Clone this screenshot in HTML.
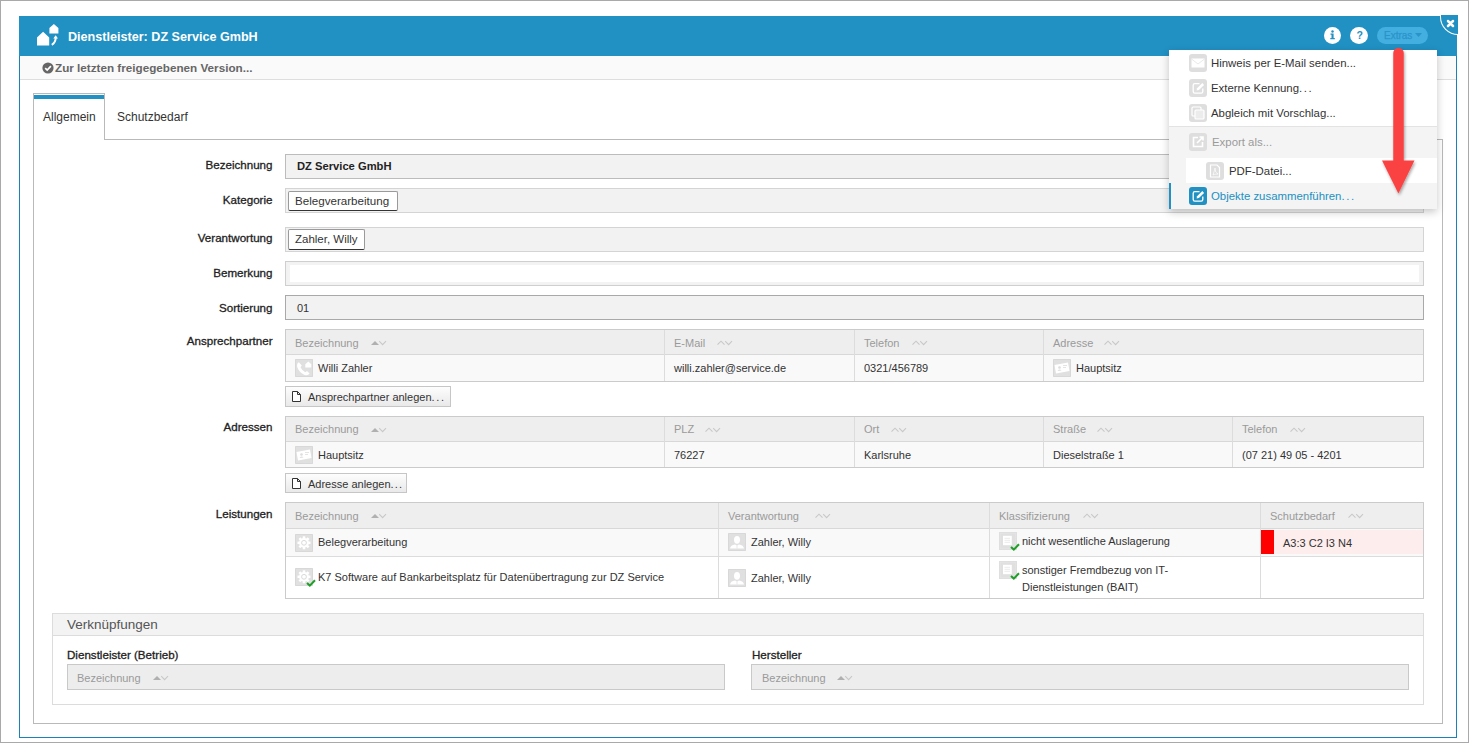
<!DOCTYPE html>
<html><head><meta charset="utf-8"><style>
html,body{margin:0;padding:0;width:1469px;height:743px;overflow:hidden;background:#fff;font-family:"Liberation Sans",sans-serif;}
.a{position:absolute;box-sizing:border-box;}
.t{position:absolute;white-space:nowrap;line-height:1;}
.circ{border-radius:50%;background:#fff;color:#2190c3;text-align:center;}
.ib{width:18px;height:18px;background:#e0e0e0;border-radius:1px;box-shadow:inset 0 0 0 1px #d8d8d8;}
.ib svg,.mib svg{display:block}
.mib{width:18px;height:18px;border-radius:3px;}
</style></head><body>
<div class="a" style="left:0px;top:0px;width:1469px;height:743px;border:1px solid #a9a9a9;background:#fff"></div>
<div class="a" style="left:19px;top:16px;width:1438px;height:722px;border:1px solid #1b82b8;background:#fff"></div>
<div class="a" style="left:19px;top:16px;width:1438px;height:40px;background:#2190c3"></div>
<svg class="a" style="left:30px;top:20px" width="32" height="30" viewBox="0 0 32 30">
<path d="M7 25.4 V17.4 L13.1 11.8 L19.2 17.4 V25.4 Z" fill="#fff"/>
<path d="M19.4 13.5 V7.9 L23.9 4 L28.4 7.9 V13.5 Z" fill="#fff"/>
<path d="M21.8 24.8 Q25.6 22.5 25.7 18" stroke="#fff" stroke-width="2" fill="none"/>
<path d="M23.3 18.6 L25.7 15.2 L28 18.6 Z" fill="#fff"/>
</svg>
<div class="t" style="left:68px;top:31.33px;font-size:12.6px;font-weight:700;color:#fff;">Dienstleister: DZ Service GmbH</div>
<div class="a circ" style="left:1324px;top:27px;width:17px;height:17px"></div>
<svg class="a" style="left:1324px;top:27px" width="17" height="17" viewBox="0 0 17 17"><circle cx="8.5" cy="4.6" r="1.25" fill="#2190c3"/><path d="M6.5 6.6 H9.6 V11 H10.8 V12.2 H6.3 V11 H7.5 V7.7 H6.5 Z" fill="#2190c3"/></svg>
<div class="a circ" style="left:1350px;top:27px;width:18px;height:17px"></div>
<div class="t" style="left:1356.6px;top:30.31px;font-size:10.5px;font-weight:700;color:#2190c3;">?</div>
<div class="a" style="left:1377px;top:27px;width:51px;height:17px;border-radius:9px;background:#43aee0"></div>
<div class="t" style="left:1384px;top:30.54px;font-size:10px;font-weight:400;color:#2a94c9;-webkit-text-stroke:0.25px #2a94c9">Extras</div>
<svg class="a" style="left:1415px;top:33px" width="7" height="5"><path d="M0 0 H7 L3.5 4 Z" fill="#2a94c9"/></svg>
<div class="a" style="left:1440px;top:15px;width:18px;height:20px;background:#2190c3;border-left:1px solid #fff;border-bottom:1px solid #fff;border-bottom-left-radius:18px;box-sizing:border-box"></div>
<svg class="a" style="left:1446px;top:19px" width="9" height="9" viewBox="0 0 9 9"><path d="M2 2 L7 7 M7 2 L2 7" stroke="#fff" stroke-width="2.5" stroke-linecap="round"/></svg>
<div class="a" style="left:20px;top:56px;width:1436px;height:23px;background:#fafafa"></div>
<div class="a" style="left:20px;top:79px;width:1436px;height:1px;background:#dedede"></div>
<svg class="a" style="left:42px;top:62px" width="12" height="12" viewBox="0 0 12 12"><circle cx="6" cy="6" r="5.6" fill="#666"/><path d="M3.2 6.2 L5.2 8.1 L8.9 4.2" stroke="#fff" stroke-width="1.7" fill="none"/></svg>
<div class="t" style="left:55px;top:61.60px;font-size:11.7px;font-weight:700;color:#666;">Zur letzten freigegebenen Version...</div>
<div class="a" style="left:33px;top:139px;width:1410px;height:585px;border:1px solid #b9b9b9"></div>
<div class="a" style="left:33px;top:93px;width:72px;height:47px;border:1px solid #b9b9b9;border-bottom:none;background:#fff"></div>
<div class="a" style="left:34px;top:95px;width:70px;height:4px;background:#2190c3"></div>
<div class="t" style="left:43px;top:110.84px;font-size:12px;font-weight:400;color:#333;">Allgemein</div>
<div class="t" style="left:117px;top:110.84px;font-size:12px;font-weight:400;color:#333;">Schutzbedarf</div>
<div class="t" style="right:1196.5px;top:159.18px;font-size:11.6px;font-weight:400;color:#222;text-align:right;-webkit-text-stroke:0.3px #222">Bezeichnung</div>
<div class="a" style="left:285px;top:154px;width:1139px;height:25px;border:1px solid #bcbcbc;background:#f2f2f2"></div>
<div class="t" style="left:297px;top:160.52px;font-size:11.2px;font-weight:700;color:#222;">DZ Service GmbH</div>
<div class="t" style="right:1196.5px;top:194.18px;font-size:11.6px;font-weight:400;color:#222;text-align:right;-webkit-text-stroke:0.3px #222">Kategorie</div>
<div class="a" style="left:285px;top:188px;width:1139px;height:25px;border:1px solid #d4d4d4;background:#f2f2f2"></div>
<div class="a" style="left:288px;top:191px;width:110px;height:20px;border:1px solid #9a9a9a;border-bottom-color:#333;border-radius:2px;background:#fff"></div>
<div class="t" style="left:295px;top:195.18px;font-size:11.6px;font-weight:400;color:#333;">Belegverarbeitung</div>
<div class="t" style="right:1196.5px;top:232.18px;font-size:11.6px;font-weight:400;color:#222;text-align:right;-webkit-text-stroke:0.3px #222">Verantwortung</div>
<div class="a" style="left:285px;top:227px;width:1139px;height:25px;border:1px solid #d4d4d4;background:#f2f2f2"></div>
<div class="a" style="left:288px;top:229px;width:77px;height:21px;border:1px solid #9a9a9a;border-bottom-color:#333;border-radius:2px;background:#fff"></div>
<div class="t" style="left:295px;top:234.27px;font-size:11.5px;font-weight:400;color:#333;">Zahler, Willy</div>
<div class="t" style="right:1196.5px;top:267.18px;font-size:11.6px;font-weight:400;color:#222;text-align:right;-webkit-text-stroke:0.3px #222">Bemerkung</div>
<div class="a" style="left:285px;top:261px;width:1139px;height:25px;border:1px solid #cfcfcf;background:#f2f2f2"></div>
<div class="a" style="left:290px;top:265px;width:1129px;height:17px;background:#fff;box-shadow:0 0 2px 1px #f4f4f4"></div>
<div class="t" style="right:1196.5px;top:301.68px;font-size:11.6px;font-weight:400;color:#222;text-align:right;-webkit-text-stroke:0.3px #222">Sortierung</div>
<div class="a" style="left:285px;top:295px;width:1139px;height:25px;border:1px solid #a9a9a9;background:#f2f2f2"></div>
<div class="t" style="left:297px;top:303.19px;font-size:11px;font-weight:400;color:#333;">01</div>
<div class="t" style="right:1196.5px;top:335.18px;font-size:11.6px;font-weight:400;color:#222;text-align:right;-webkit-text-stroke:0.3px #222">Ansprechpartner</div>
<div class="a" style="left:285px;top:329px;width:1139px;height:53px;border:1px solid #cbcbcb;background:#fff"></div>
<div class="a" style="left:286px;top:330px;width:1137px;height:24px;background:#eeeeee"></div>
<div class="a" style="left:286px;top:354px;width:1137px;height:1px;background:#d8d8d8"></div>
<div class="a" style="left:286px;top:355px;width:1137px;height:26px;background:#f9f9f9"></div>
<div class="a" style="left:664px;top:330px;width:1px;height:51px;background:#dcdcdc"></div>
<div class="a" style="left:854px;top:330px;width:1px;height:51px;background:#dcdcdc"></div>
<div class="a" style="left:1043px;top:330px;width:1px;height:51px;background:#dcdcdc"></div>
<div class="t" style="left:295px;top:337.69px;font-size:11px;font-weight:400;color:#9a9a9a;">Bezeichnung</div>
<svg class="a" style="left:371px;top:340px" width="16" height="6" viewBox="0 0 16 6"><path d="M0 5 L4 1 L8 5 Z" fill="#b0b0b0"/><path d="M8.2 1.2 L11.6 4.6 L15 1.2" stroke="#c8c8c8" stroke-width="1.1" fill="none"/></svg>
<div class="t" style="left:674px;top:337.69px;font-size:11px;font-weight:400;color:#9a9a9a;">E-Mail</div>
<svg class="a" style="left:717px;top:340px" width="16" height="6" viewBox="0 0 16 6"><path d="M0.5 4.6 L4 1.2 L7.5 4.6" stroke="#c8c8c8" stroke-width="1.1" fill="none"/><path d="M8.2 1.2 L11.6 4.6 L15 1.2" stroke="#c8c8c8" stroke-width="1.1" fill="none"/></svg>
<div class="t" style="left:864px;top:337.69px;font-size:11px;font-weight:400;color:#9a9a9a;">Telefon</div>
<svg class="a" style="left:912px;top:340px" width="16" height="6" viewBox="0 0 16 6"><path d="M0.5 4.6 L4 1.2 L7.5 4.6" stroke="#c8c8c8" stroke-width="1.1" fill="none"/><path d="M8.2 1.2 L11.6 4.6 L15 1.2" stroke="#c8c8c8" stroke-width="1.1" fill="none"/></svg>
<div class="t" style="left:1053px;top:337.69px;font-size:11px;font-weight:400;color:#9a9a9a;">Adresse</div>
<svg class="a" style="left:1104px;top:340px" width="16" height="6" viewBox="0 0 16 6"><path d="M0.5 4.6 L4 1.2 L7.5 4.6" stroke="#c8c8c8" stroke-width="1.1" fill="none"/><path d="M8.2 1.2 L11.6 4.6 L15 1.2" stroke="#c8c8c8" stroke-width="1.1" fill="none"/></svg>
<div class="a ib" style="left:295px;top:359px"><svg width="18" height="18" viewBox="0 0 18 18"><path d="M3.8 3.3 Q1.6 4.6 2.2 8 Q4.2 13.5 9.6 16 Q13 17 14.6 14.6 L12 12 L10.3 13.2 Q7 11.6 5.5 8.3 L6.8 6.6 Z" fill="#fff"/><path d="M10.3 8.6 V5.3 L13.3 2.6 L16.3 5.3 V8.6 Z" fill="#fff"/></svg></div>
<div class="t" style="left:318px;top:362.69px;font-size:11px;font-weight:400;color:#333;">Willi Zahler</div>
<div class="t" style="left:674px;top:362.69px;font-size:11px;font-weight:400;color:#333;">willi.zahler@service.de</div>
<div class="t" style="left:864px;top:362.69px;font-size:11px;font-weight:400;color:#333;">0321/456789</div>
<div class="a ib" style="left:1053px;top:359px"><svg width="18" height="18" viewBox="0 0 18 18"><path d="M1.5 6 L15 3.5 L16.5 12 L3 14.5 Z" fill="#fff"/><circle cx="6.5" cy="8.5" r="1.3" fill="#ddd"/><path d="M4.5 12 Q6.5 9.5 8.5 11.5" fill="#ddd"/><path d="M10 6.5 H14 M10 8.5 H13" stroke="#ddd" stroke-width="0.8"/></svg></div>
<div class="t" style="left:1076px;top:362.69px;font-size:11px;font-weight:400;color:#333;">Hauptsitz</div>
<div class="a" style="left:285px;top:386px;width:166px;height:21px;border:1px solid #c6c6c6;background:linear-gradient(#fdfdfd,#e9e9e9);box-sizing:border-box"></div>
<svg class="a" style="left:291px;top:390px" width="11" height="13" viewBox="0 0 11 13"><path d="M1.5 1.5 H6.5 L9.5 4.5 V11.5 H1.5 Z M6.5 1.5 V4.5 H9.5" stroke="#333" stroke-width="1" fill="#fff"/></svg>
<div class="t" style="left:308px;top:392.19px;font-size:11px;font-weight:400;color:#333;">Ansprechpartner anlegen<span style="letter-spacing:1.7px">...</span></div>
<div class="t" style="right:1196.5px;top:421.18px;font-size:11.6px;font-weight:400;color:#222;text-align:right;-webkit-text-stroke:0.3px #222">Adressen</div>
<div class="a" style="left:285px;top:416px;width:1139px;height:52px;border:1px solid #cbcbcb;background:#fff"></div>
<div class="a" style="left:286px;top:417px;width:1137px;height:24px;background:#eeeeee"></div>
<div class="a" style="left:286px;top:441px;width:1137px;height:1px;background:#d8d8d8"></div>
<div class="a" style="left:286px;top:442px;width:1137px;height:25px;background:#f9f9f9"></div>
<div class="a" style="left:664px;top:417px;width:1px;height:50px;background:#dcdcdc"></div>
<div class="a" style="left:854px;top:417px;width:1px;height:50px;background:#dcdcdc"></div>
<div class="a" style="left:1043px;top:417px;width:1px;height:50px;background:#dcdcdc"></div>
<div class="a" style="left:1232px;top:417px;width:1px;height:50px;background:#dcdcdc"></div>
<div class="t" style="left:295px;top:423.69px;font-size:11px;font-weight:400;color:#9a9a9a;">Bezeichnung</div>
<svg class="a" style="left:371px;top:427px" width="16" height="6" viewBox="0 0 16 6"><path d="M0 5 L4 1 L8 5 Z" fill="#b0b0b0"/><path d="M8.2 1.2 L11.6 4.6 L15 1.2" stroke="#c8c8c8" stroke-width="1.1" fill="none"/></svg>
<div class="t" style="left:674px;top:423.69px;font-size:11px;font-weight:400;color:#9a9a9a;">PLZ</div>
<svg class="a" style="left:705px;top:427px" width="16" height="6" viewBox="0 0 16 6"><path d="M0.5 4.6 L4 1.2 L7.5 4.6" stroke="#c8c8c8" stroke-width="1.1" fill="none"/><path d="M8.2 1.2 L11.6 4.6 L15 1.2" stroke="#c8c8c8" stroke-width="1.1" fill="none"/></svg>
<div class="t" style="left:864px;top:423.69px;font-size:11px;font-weight:400;color:#9a9a9a;">Ort</div>
<svg class="a" style="left:891px;top:427px" width="16" height="6" viewBox="0 0 16 6"><path d="M0.5 4.6 L4 1.2 L7.5 4.6" stroke="#c8c8c8" stroke-width="1.1" fill="none"/><path d="M8.2 1.2 L11.6 4.6 L15 1.2" stroke="#c8c8c8" stroke-width="1.1" fill="none"/></svg>
<div class="t" style="left:1053px;top:423.69px;font-size:11px;font-weight:400;color:#9a9a9a;">Straße</div>
<svg class="a" style="left:1097px;top:427px" width="16" height="6" viewBox="0 0 16 6"><path d="M0.5 4.6 L4 1.2 L7.5 4.6" stroke="#c8c8c8" stroke-width="1.1" fill="none"/><path d="M8.2 1.2 L11.6 4.6 L15 1.2" stroke="#c8c8c8" stroke-width="1.1" fill="none"/></svg>
<div class="t" style="left:1242px;top:423.69px;font-size:11px;font-weight:400;color:#9a9a9a;">Telefon</div>
<svg class="a" style="left:1290px;top:427px" width="16" height="6" viewBox="0 0 16 6"><path d="M0.5 4.6 L4 1.2 L7.5 4.6" stroke="#c8c8c8" stroke-width="1.1" fill="none"/><path d="M8.2 1.2 L11.6 4.6 L15 1.2" stroke="#c8c8c8" stroke-width="1.1" fill="none"/></svg>
<div class="a ib" style="left:295px;top:446px"><svg width="18" height="18" viewBox="0 0 18 18"><path d="M1.5 6 L15 3.5 L16.5 12 L3 14.5 Z" fill="#fff"/><circle cx="6.5" cy="8.5" r="1.3" fill="#ddd"/><path d="M4.5 12 Q6.5 9.5 8.5 11.5" fill="#ddd"/><path d="M10 6.5 H14 M10 8.5 H13" stroke="#ddd" stroke-width="0.8"/></svg></div>
<div class="t" style="left:318px;top:449.69px;font-size:11px;font-weight:400;color:#333;">Hauptsitz</div>
<div class="t" style="left:674px;top:449.69px;font-size:11px;font-weight:400;color:#333;">76227</div>
<div class="t" style="left:864px;top:449.69px;font-size:11px;font-weight:400;color:#333;">Karlsruhe</div>
<div class="t" style="left:1053px;top:449.69px;font-size:11px;font-weight:400;color:#333;">Dieselstraße 1</div>
<div class="t" style="left:1242px;top:449.69px;font-size:11px;font-weight:400;color:#333;">(07 21) 49 05 - 4201</div>
<div class="a" style="left:285px;top:473px;width:122px;height:20px;border:1px solid #c6c6c6;background:linear-gradient(#fdfdfd,#e9e9e9);box-sizing:border-box"></div>
<svg class="a" style="left:291px;top:477px" width="11" height="13" viewBox="0 0 11 13"><path d="M1.5 1.5 H6.5 L9.5 4.5 V11.5 H1.5 Z M6.5 1.5 V4.5 H9.5" stroke="#333" stroke-width="1" fill="#fff"/></svg>
<div class="t" style="left:308px;top:479.19px;font-size:11px;font-weight:400;color:#333;">Adresse anlegen<span style="letter-spacing:1.2px">...</span></div>
<div class="t" style="right:1196.5px;top:508.18px;font-size:11.6px;font-weight:400;color:#222;text-align:right;-webkit-text-stroke:0.3px #222">Leistungen</div>
<div class="a" style="left:285px;top:502px;width:1139px;height:97px;border:1px solid #cbcbcb;background:#fff"></div>
<div class="a" style="left:286px;top:503px;width:1137px;height:25px;background:#eeeeee"></div>
<div class="a" style="left:286px;top:528px;width:1137px;height:1px;background:#d8d8d8"></div>
<div class="a" style="left:286px;top:529px;width:1137px;height:27px;background:#f9f9f9"></div>
<div class="a" style="left:286px;top:556px;width:1137px;height:1px;background:#dcdcdc"></div>
<div class="a" style="left:286px;top:557px;width:1137px;height:41px;background:#fff"></div>
<div class="a" style="left:718px;top:503px;width:1px;height:95px;background:#dcdcdc"></div>
<div class="a" style="left:989px;top:503px;width:1px;height:95px;background:#dcdcdc"></div>
<div class="a" style="left:1260px;top:503px;width:1px;height:95px;background:#dcdcdc"></div>
<div class="t" style="left:295px;top:510.69px;font-size:11px;font-weight:400;color:#9a9a9a;">Bezeichnung</div>
<svg class="a" style="left:371px;top:513px" width="16" height="6" viewBox="0 0 16 6"><path d="M0 5 L4 1 L8 5 Z" fill="#b0b0b0"/><path d="M8.2 1.2 L11.6 4.6 L15 1.2" stroke="#c8c8c8" stroke-width="1.1" fill="none"/></svg>
<div class="t" style="left:728px;top:510.69px;font-size:11px;font-weight:400;color:#9a9a9a;">Verantwortung</div>
<svg class="a" style="left:815px;top:513px" width="16" height="6" viewBox="0 0 16 6"><path d="M0.5 4.6 L4 1.2 L7.5 4.6" stroke="#c8c8c8" stroke-width="1.1" fill="none"/><path d="M8.2 1.2 L11.6 4.6 L15 1.2" stroke="#c8c8c8" stroke-width="1.1" fill="none"/></svg>
<div class="t" style="left:999px;top:510.69px;font-size:11px;font-weight:400;color:#9a9a9a;">Klassifizierung</div>
<svg class="a" style="left:1083px;top:513px" width="16" height="6" viewBox="0 0 16 6"><path d="M0.5 4.6 L4 1.2 L7.5 4.6" stroke="#c8c8c8" stroke-width="1.1" fill="none"/><path d="M8.2 1.2 L11.6 4.6 L15 1.2" stroke="#c8c8c8" stroke-width="1.1" fill="none"/></svg>
<div class="t" style="left:1270px;top:510.69px;font-size:11px;font-weight:400;color:#9a9a9a;">Schutzbedarf</div>
<svg class="a" style="left:1348px;top:513px" width="16" height="6" viewBox="0 0 16 6"><path d="M0.5 4.6 L4 1.2 L7.5 4.6" stroke="#c8c8c8" stroke-width="1.1" fill="none"/><path d="M8.2 1.2 L11.6 4.6 L15 1.2" stroke="#c8c8c8" stroke-width="1.1" fill="none"/></svg>
<div class="a ib" style="left:295px;top:534px"><svg width="18" height="18" viewBox="0 0 18 18"><g transform="translate(9 8.8)"><circle r="4.9" fill="#fff"/><g fill="#fff"><rect x="-1.25" y="-6.5" width="2.5" height="13"/><rect x="-1.25" y="-6.5" width="2.5" height="13" transform="rotate(45)"/><rect x="-1.25" y="-6.5" width="2.5" height="13" transform="rotate(90)"/><rect x="-1.25" y="-6.5" width="2.5" height="13" transform="rotate(135)"/></g><circle r="2.4" fill="none" stroke="#dadada" stroke-width="1"/></g></svg></div>
<div class="t" style="left:318px;top:536.69px;font-size:11px;font-weight:400;color:#333;">Belegverarbeitung</div>
<div class="a ib" style="left:295px;top:568px"><svg width="18" height="18" viewBox="0 0 18 18"><g transform="translate(9 8.8)"><circle r="4.9" fill="#fff"/><g fill="#fff"><rect x="-1.25" y="-6.5" width="2.5" height="13"/><rect x="-1.25" y="-6.5" width="2.5" height="13" transform="rotate(45)"/><rect x="-1.25" y="-6.5" width="2.5" height="13" transform="rotate(90)"/><rect x="-1.25" y="-6.5" width="2.5" height="13" transform="rotate(135)"/></g><circle r="2.4" fill="none" stroke="#dadada" stroke-width="1"/></g></svg></div>
<svg class="a" style="left:306px;top:579px" width="10" height="8" viewBox="0 0 10 8"><path d="M1 4 L3.8 6.6 L9 1.2" stroke="#1f9e28" stroke-width="2" fill="none"/></svg>
<div class="t" style="left:318px;top:571.69px;font-size:11px;font-weight:400;color:#333;">K7 Software auf Bankarbeitsplatz für Datenübertragung zur DZ Service</div>
<div class="a ib" style="left:728px;top:533px"><svg width="18" height="18" viewBox="0 0 18 18"><ellipse cx="9" cy="6.8" rx="3" ry="3.9" fill="#fff"/><path d="M2 15.5 Q2.5 12.2 7 11.6 L9 12.5 L11 11.6 Q15.5 12.2 16 15.5 Z" fill="#fff"/><path d="M9 12.2 V15.5" stroke="#e0e0e0" stroke-width="0.7"/></svg></div>
<div class="t" style="left:751px;top:536.69px;font-size:11px;font-weight:400;color:#333;">Zahler, Willy</div>
<div class="a ib" style="left:728px;top:569px"><svg width="18" height="18" viewBox="0 0 18 18"><ellipse cx="9" cy="6.8" rx="3" ry="3.9" fill="#fff"/><path d="M2 15.5 Q2.5 12.2 7 11.6 L9 12.5 L11 11.6 Q15.5 12.2 16 15.5 Z" fill="#fff"/><path d="M9 12.2 V15.5" stroke="#e0e0e0" stroke-width="0.7"/></svg></div>
<div class="t" style="left:751px;top:572.69px;font-size:11px;font-weight:400;color:#333;">Zahler, Willy</div>
<div class="a ib" style="left:999px;top:532px"><svg width="18" height="18" viewBox="0 0 18 18"><rect x="1" y="1" width="16" height="16" fill="none" stroke="#e6e6e6" stroke-width="1"/><path d="M4 3.8 H12.8 V13.2 H4 Z" fill="#fff"/><path d="M5.5 6.3 H11 M5.5 8.3 H11 M5.5 10.3 H11" stroke="#e9e9e9" stroke-width="0.9"/></svg></div>
<svg class="a" style="left:1010px;top:543px" width="10" height="8" viewBox="0 0 10 8"><path d="M1 4 L3.8 6.6 L9 1.2" stroke="#1f9e28" stroke-width="2" fill="none"/></svg>
<div class="t" style="left:1022px;top:535.69px;font-size:11px;font-weight:400;color:#333;">nicht wesentliche Auslagerung</div>
<div class="a ib" style="left:999px;top:561px"><svg width="18" height="18" viewBox="0 0 18 18"><rect x="1" y="1" width="16" height="16" fill="none" stroke="#e6e6e6" stroke-width="1"/><path d="M4 3.8 H12.8 V13.2 H4 Z" fill="#fff"/><path d="M5.5 6.3 H11 M5.5 8.3 H11 M5.5 10.3 H11" stroke="#e9e9e9" stroke-width="0.9"/></svg></div>
<svg class="a" style="left:1010px;top:572px" width="10" height="8" viewBox="0 0 10 8"><path d="M1 4 L3.8 6.6 L9 1.2" stroke="#1f9e28" stroke-width="2" fill="none"/></svg>
<div class="t" style="left:1022px;top:564.69px;font-size:11px;font-weight:400;color:#333;">sonstiger Fremdbezug von IT-</div>
<div class="t" style="left:1022px;top:581.69px;font-size:11px;font-weight:400;color:#333;">Dienstleistungen (BAIT)</div>
<div class="a" style="left:1261px;top:530px;width:162px;height:24px;background:#fdeded"></div>
<div class="a" style="left:1261px;top:530px;width:13px;height:24px;background:#f00"></div>
<div class="t" style="left:1283px;top:537.89px;font-size:11px;font-weight:400;color:#333;">A3:3 C2 I3 N4</div>
<div class="a" style="left:52px;top:613px;width:1372px;height:92px;border:1px solid #dcdcdc;background:#fff"></div>
<div class="a" style="left:53px;top:614px;width:1370px;height:21px;background:#f3f3f3"></div>
<div class="a" style="left:53px;top:635px;width:1370px;height:1px;background:#dcdcdc"></div>
<div class="t" style="left:67px;top:617.57px;font-size:13.5px;font-weight:400;color:#555;">Verknüpfungen</div>
<div class="t" style="left:67px;top:649.18px;font-size:11.6px;font-weight:400;color:#222;-webkit-text-stroke:0.3px #222">Dienstleister (Betrieb)</div>
<div class="a" style="left:67px;top:664px;width:658px;height:26px;border:1px solid #c9c9c9;background:#ededed"></div>
<div class="t" style="left:77px;top:672.69px;font-size:11px;font-weight:400;color:#9a9a9a;">Bezeichnung</div>
<svg class="a" style="left:153px;top:675px" width="16" height="6" viewBox="0 0 16 6"><path d="M0 5 L4 1 L8 5 Z" fill="#b0b0b0"/><path d="M8.2 1.2 L11.6 4.6 L15 1.2" stroke="#c8c8c8" stroke-width="1.1" fill="none"/></svg>
<div class="t" style="left:752px;top:649.18px;font-size:11.6px;font-weight:400;color:#222;-webkit-text-stroke:0.3px #222">Hersteller</div>
<div class="a" style="left:751px;top:664px;width:658px;height:26px;border:1px solid #c9c9c9;background:#ededed"></div>
<div class="t" style="left:762px;top:672.69px;font-size:11px;font-weight:400;color:#9a9a9a;">Bezeichnung</div>
<svg class="a" style="left:837px;top:675px" width="16" height="6" viewBox="0 0 16 6"><path d="M0 5 L4 1 L8 5 Z" fill="#b0b0b0"/><path d="M8.2 1.2 L11.6 4.6 L15 1.2" stroke="#c8c8c8" stroke-width="1.1" fill="none"/></svg>
<div class="a" style="left:1169px;top:50px;width:268px;height:159px;background:#fff;box-shadow:0 3px 8px rgba(0,0,0,0.22)"></div>
<div class="a" style="left:1169px;top:126px;width:268px;height:1px;background:#e3e3e3"></div>
<div class="a" style="left:1169px;top:127px;width:268px;height:82px;background:#f4f4f4"></div>
<div class="a" style="left:1186px;top:158px;width:251px;height:25px;background:#fff"></div>
<div class="a" style="left:1169px;top:183px;width:2px;height:26px;background:#2190c3"></div>
<div class="a mib" style="left:1189px;top:54px;background:#dedede"><svg width="18" height="18" viewBox="0 0 18 18"><rect x="2.5" y="4.5" width="13" height="9" fill="#fff"/><path d="M2.5 5 L9 10 L15.5 5" stroke="#e2e2e2" stroke-width="0.8" fill="none"/></svg></div>
<div class="t" style="left:1211px;top:57.85px;font-size:11.4px;font-weight:400;color:#333;">Hinweis per E-Mail senden...</div>
<div class="a mib" style="left:1189px;top:79px;background:#dedede"><svg width="18" height="18" viewBox="0 0 18 18"><path d="M10.5 4.6 H5.8 Q4.2 4.6 4.2 6.2 V12.6 Q4.2 14.2 5.8 14.2 H12.2 Q13.8 14.2 13.8 12.6 V9.5" stroke="#fff" stroke-width="1.3" fill="none"/><path d="M7.6 11.6 L8.1 9.3 L13.3 4.1 L15.1 5.9 L9.9 11.1 Z" fill="#fff"/></svg></div>
<div class="t" style="left:1211px;top:82.85px;font-size:11.4px;font-weight:400;color:#333;">Externe Kennung<span style="letter-spacing:1.6px">...</span></div>
<div class="a mib" style="left:1189px;top:104px;background:#dedede"><svg width="18" height="18" viewBox="0 0 18 18"><rect x="3" y="3" width="9" height="9" rx="1" fill="none" stroke="#fff" stroke-width="1.2"/><rect x="6" y="6" width="9" height="9" rx="1" fill="#ececec" stroke="#fff" stroke-width="1.2"/></svg></div>
<div class="t" style="left:1211px;top:107.85px;font-size:11.4px;font-weight:400;color:#333;">Abgleich mit Vorschlag...</div>
<div class="a mib" style="left:1189px;top:133px;background:#dedede"><svg width="18" height="18" viewBox="0 0 18 18"><path d="M9 4.5 H4.5 V13.5 H13.5 V9" stroke="#fff" stroke-width="1.6" fill="none"/><path d="M8 10 L13.5 4.5 M10.5 4 H14 V7.5" stroke="#fff" stroke-width="1.6" fill="none"/></svg></div>
<div class="t" style="left:1212px;top:136.85px;font-size:11.4px;font-weight:400;color:#9a9a9a;">Export als...</div>
<div class="a mib" style="left:1206px;top:162px;background:#dedede"><svg width="18" height="18" viewBox="0 0 18 18"><path d="M4.5 3 H11 L13.5 5.5 V15 H4.5 Z" fill="none" stroke="#fff" stroke-width="1.2"/><path d="M7 13 Q9 7 9 6 Q9 11 12 12 Q8 12 7 13" stroke="#fff" stroke-width="0.7" fill="none"/></svg></div>
<div class="t" style="left:1229px;top:165.85px;font-size:11.4px;font-weight:400;color:#333;">PDF-Datei...</div>
<div class="a mib" style="left:1189px;top:187px;background:#2190c3"><svg width="18" height="18" viewBox="0 0 18 18"><path d="M10.5 4.6 H5.8 Q4.2 4.6 4.2 6.2 V12.6 Q4.2 14.2 5.8 14.2 H12.2 Q13.8 14.2 13.8 12.6 V9.5" stroke="#fff" stroke-width="1.3" fill="none"/><path d="M7.6 11.6 L8.1 9.3 L13.3 4.1 L15.1 5.9 L9.9 11.1 Z" fill="#fff"/></svg></div>
<div class="t" style="left:1211px;top:190.85px;font-size:11.4px;font-weight:400;color:#2190c3;">Objekte zusammenführen<span style="letter-spacing:1.6px">...</span></div>
<svg class="a" style="left:1370px;top:40px" width="60" height="165" viewBox="0 0 60 165">
<defs><filter id="sh" x="-30%" y="-10%" width="160%" height="130%"><feGaussianBlur in="SourceAlpha" stdDeviation="1.5"/><feOffset dx="1" dy="1.5"/><feComponentTransfer><feFuncA type="linear" slope="0.35"/></feComponentTransfer><feMerge><feMergeNode/><feMergeNode in="SourceGraphic"/></feMerge></filter></defs>
<g filter="url(#sh)"><path d="M28.5 13 V122" stroke="#fa4242" stroke-width="10.5" stroke-linecap="round"/><path d="M12 120.5 H44.5 L28.4 153.5 Z" fill="#fa4242"/></g>
</svg>
</body></html>
